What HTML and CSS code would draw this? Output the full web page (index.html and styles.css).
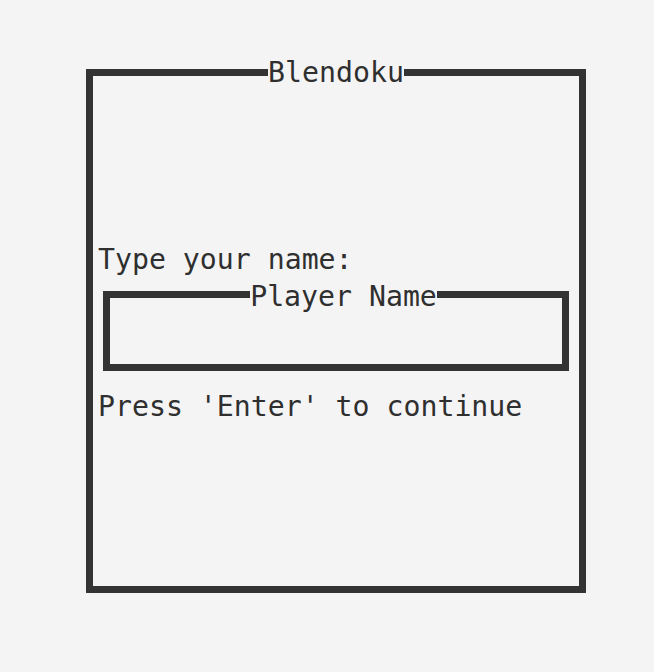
FILE: index.html
```html
<!DOCTYPE html>
<html lang="en">
<head>
    <meta charset="UTF-8">
    <meta name="viewport" content="width=device-width, initial-scale=1.0">
    <title>Blendoku</title>
    <link rel="stylesheet" href="styles.css">
</head>
<body>

<div class="screen">
    <!-- Main window -->
    <fieldset class="window">
        <legend>Blendoku</legend>

        <p class="prompt">Type your name:</p>

        <!-- Name input box -->
        <fieldset class="name-box">
            <legend>Player Name</legend>
            <div class="name-value"></div>
        </fieldset>

        <p class="hint">Press 'Enter' to continue</p>
    </fieldset>
</div>

</body>
</html>
```

FILE: styles.css
```css
body {
    margin: 0;
    background-color: #f4f4f4;
    color: #2f2f2f;
    font-family: 'DejaVu Sans Mono', monospace;
    font-size: 28.2px;
}

.screen {
    padding: 56px 0 0 86px;
}

fieldset {
    margin: 0;
    border: 7px solid #333333;
    min-width: 0;
}

legend {
    margin: 0 auto;
    padding: 0;
    line-height: 33px;
}

.window {
    box-sizing: border-box;
    width: 500px;
    padding: 152px 5px 161px;
}

.prompt,
.hint {
    margin: 0;
    line-height: 37px;
    white-space: pre;
}

/* legend sits a little right of centre, like the terminal grid */
.name-box {
    box-sizing: border-box;
    width: 466px;
    margin: 1px 0 0 5px;
    padding: 0 0 0 15px;
}

.name-box legend {
    padding: 4px 0 0;
    line-height: 27px;
}

.name-value {
    height: 54px;
}

.hint {
    margin-top: 17px;
}
```
